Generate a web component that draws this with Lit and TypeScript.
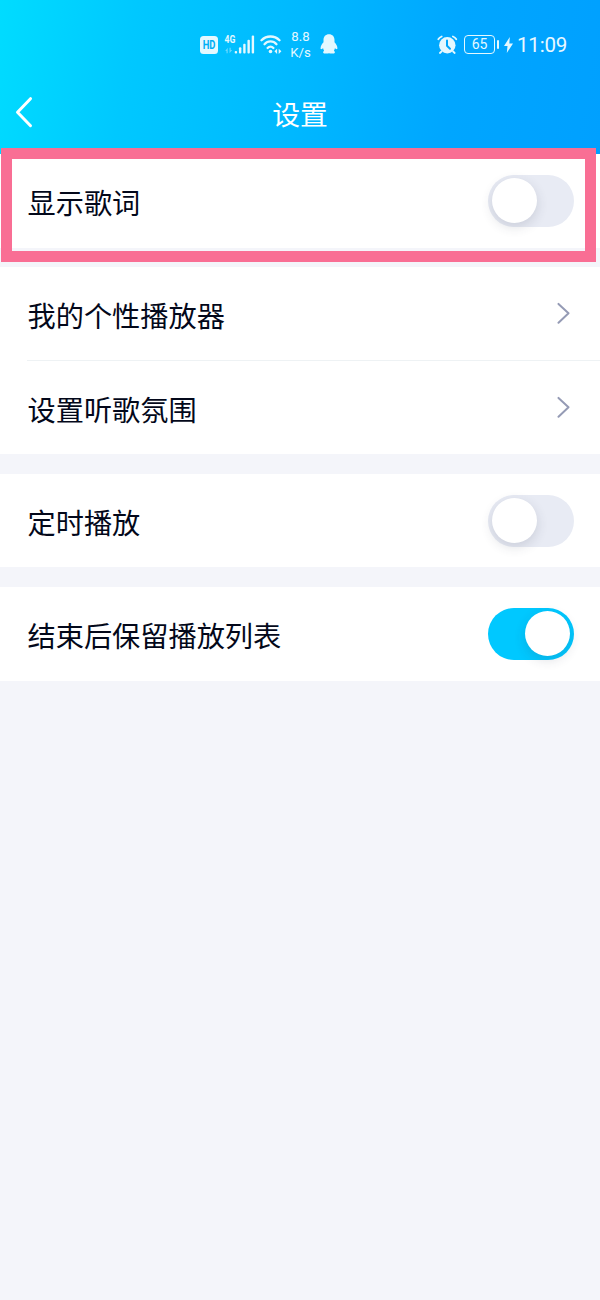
import { LitElement, html, css, svg } from "lit";
import { customElement, property } from "lit/decorators.js";

@customElement("toggle-switch")
class ToggleSwitch extends LitElement {
  @property({ type: Boolean, reflect: true }) on = false;

  static styles = css`
    :host {
      display: flex;
      box-sizing: border-box;
      width: 85.5px;
      height: 52px;
      padding: 3px 3.5px 3.5px;
      border-radius: 26px;
      background: #e8ebf4;
      align-items: center;
    }
    :host([on]) {
      background: #00c8ff;
      justify-content: flex-end;
    }
    .knob {
      width: 45px;
      height: 45px;
      border-radius: 50%;
      background: #fff;
      box-shadow: 0 4px 12px rgba(50, 55, 80, 0.16);
    }
  `;

  render() {
    return html`<div class="knob"></div>`;
  }
}

@customElement("setting-row")
class SettingRow extends LitElement {
  @property() label = "";
  @property() kind = "link";

  static styles = css`
    :host {
      display: flex;
      box-sizing: border-box;
      height: 93.6px;
      padding: 0 26.3px 0 27.5px;
      align-items: center;
      justify-content: space-between;
      background: #fff;
    }
    :host([kind="link"]) {
      height: 93px;
    }
    .label {
      font-size: 28.2px;
      line-height: 40px;
      color: #03081a;
      white-space: nowrap;
      padding-top: 2px;
    }
    .arrow {
      width: 14px;
      height: 22px;
      margin: 0 3.7px 1px 0;
    }
  `;

  render() {
    return html`
      <span class="label">${this.label}</span>
      ${this.kind === "link"
        ? html`<svg class="arrow" viewBox="0 0 14 22" fill="none" stroke="#959bb5" stroke-width="2" stroke-linecap="round" stroke-linejoin="round">
            <path d="M2.500 1.900 12.500 11.300 2.500 20.700" />
          </svg>`
        : html`<toggle-switch ?on=${this.kind === "on"}></toggle-switch>`}
    `;
  }
}

const signalBars = [2.6, 6.3, 9.8, 13.8, 18];

@customElement("app-root")
class AppRoot extends LitElement {
  static styles = css`
    :host {
      display: block;
      position: relative;
      width: 600px;
      height: 1300px;
      overflow: hidden;
      background: #f4f5fa;
      font-family: "Noto Sans CJK SC", "Noto Sans", sans-serif;
    }
    .top {
      box-sizing: border-box;
      height: 154px;
      background: linear-gradient(99deg, #00dcff 0%, #00c8ff 22%, #00b8ff 50%, #00a6ff 75%, #00a0ff 100%);
      color: #fff;
    }
    .status {
      display: flex;
      box-sizing: border-box;
      height: 74px;
      padding: 15px 31px 0 200px;
      align-items: center;
      justify-content: space-between;
    }
    .side {
      display: flex;
      align-items: center;
    }
    .status svg {
      display: block;
      flex: none;
    }
    .svg-text {
      font-family: Roboto, sans-serif;
      font-weight: 700;
    }
    .signal {
      margin-left: 6px;
    }
    .wifi {
      margin-left: 5px;
    }
    .speed {
      display: flex;
      flex-direction: column;
      width: 22px;
      margin-left: 7.5px;
      align-items: center;
      color: #e4f8ff;
      font: 400 13.2px/15.3px Roboto, sans-serif;
    }
    .penguin {
      margin-left: 8.5px;
      margin-bottom: 1px;
    }
    .battery {
      box-sizing: border-box;
      width: 31px;
      height: 19px;
      margin-left: 6px;
      border: 1.5px solid #e4f8ff;
      border-radius: 4px;
      color: #e4f8ff;
      font: 400 14px/17px Roboto, sans-serif;
      text-align: center;
    }
    .cap {
      width: 2px;
      height: 9px;
      margin-left: 2px;
      border-radius: 1px;
      background: #e4f8ff;
    }
    .bolt {
      margin-left: 5px;
    }
    .clock {
      width: 52px;
      margin-left: 4px;
      padding-top: 1px;
      color: #e9f8ff;
      font: 400 20.5px/30px Roboto, sans-serif;
      letter-spacing: -0.2px;
      white-space: nowrap;
    }
    .bar {
      display: grid;
      grid-template-columns: 60px 1fr 60px;
      height: 78px;
      align-items: center;
    }
    .back {
      margin-left: 14px;
      margin-bottom: 2px;
    }
    .title {
      padding-bottom: 1px;
      font-size: 27.8px;
      line-height: 40px;
      text-align: center;
    }
    .group {
      margin-bottom: 19.6px;
    }
    .line {
      height: 1px;
      background: linear-gradient(to right, #fff 27px, #eef2f4 27px);
    }
    .frame {
      position: absolute;
      left: 1px;
      top: 148px;
      box-sizing: border-box;
      width: 595px;
      height: 114px;
      border: 11px solid #f96e94;
    }
  `;

  render() {
    return html`
      <header class="top">
        <div class="status">
          <div class="side">
            <svg class="hd" width="18" height="18" viewBox="0 0 18 18">
              <rect width="18" height="18" rx="3.500" fill="#e4f8ff" />
              <text class="svg-text" x="2.700" y="13.300" fill="#00aef5" font-size="12" textLength="12.800" lengthAdjust="spacingAndGlyphs">HD</text>
            </svg>
            <svg class="signal" width="31" height="22" viewBox="0 0 31 22" fill="#e4f8ff">
              <text class="svg-text" x="0.500" y="9" font-size="10.500" textLength="10.800" lengthAdjust="spacingAndGlyphs">4G</text>
              <g opacity="0.45">
                <path d="M1.200 17 3.700 13.800V19.200H2.500V17z" />
                <path d="M5.500 13.800H6.700V16H8.200L5.500 19.200z" />
              </g>
              ${signalBars.map((h, i) => svg`<rect x=${10.7 + i * 4.25} y=${19.6 - h} width="2.4" height=${h} rx="1" />`)}
            </svg>
            <svg class="wifi" width="22" height="20" viewBox="0 0 22 20" fill="none" stroke="#e4f8ff" stroke-width="2.300" stroke-linecap="round">
              <path d="M1.500 5.300C6.500 .2 14.500 .2 19.500 5.300" />
              <path d="M4.500 9.200C7.800 5.500 13.200 5.500 16.500 9.200" />
              <path d="M7.600 13C9.300 11.100 11.700 11.100 13.400 13" />
              <circle cx="10.500" cy="16.500" r="1.800" fill="#e4f8ff" stroke="none" />
              <path d="M17.100 13.700v5.200l-2.700-2.600zM18.700 13.700v5.200l2.700-2.600z" fill="#e4f8ff" stroke="none" />
            </svg>
            <div class="speed"><span>8.8</span><span>K/s</span></div>
            <svg class="penguin" width="18" height="20" viewBox="0 0 18 20" fill="#e4f8ff">
              <path d="M9 .2C5.600 .2 3.500 2.600 3.500 6V8.300C2 10 .6 12 .6 14c0 1.300.8 1.500 1.600.8l.9-.6c.2 1 .5 1.800 1 2.500-.7.500-1 1.100-1 1.700 0 1.400 3.900 1.400 5.900.9 2 .5 5.900.5 5.900-.9 0-.6-.3-1.200-1-1.700.5-.7.800-1.500 1-2.500l.9.600c.8.700 1.600.5 1.600-.8 0-2-1.400-4-2.900-5.700V6C14.500 2.600 12.400 .2 9 .2z" />
            </svg>
          </div>
          <div class="side">
            <svg class="alarm" width="21" height="20" viewBox="0 0 21 20">
              <circle cx="10.300" cy="10.300" r="8.200" fill="#e4f8ff" />
              <path d="M1.300 4.200Q2.500 2.300 4.700 1.500M19.300 4.200Q18.100 2.300 15.900 1.500M4.500 16.500 2.900 18M16.100 16.500 17.700 18" fill="none" stroke="#e4f8ff" stroke-width="1.800" stroke-linecap="round" />
              <path d="M10 5.500V10.800L13 13.700" fill="none" stroke="#00a6fb" stroke-width="2" stroke-linecap="round" stroke-linejoin="round" />
            </svg>
            <div class="battery">65</div>
            <div class="cap"></div>
            <svg class="bolt" width="9" height="16" viewBox="0 0 9 16" fill="#e4f8ff">
              <path d="M5.800 0 0 9h3.500L2.800 16 9 6.500H5.300z" />
            </svg>
            <div class="clock">11:09</div>
          </div>
        </div>
        <div class="bar">
          <svg class="back" width="20" height="32" viewBox="0 0 20 32" fill="none" stroke="#fff" stroke-width="3" stroke-linecap="round" stroke-linejoin="round">
            <path d="M16.500 2.700 3.500 16.200 16.500 29.700" />
          </svg>
          <div class="title">设置</div>
        </div>
      </header>
      <main>
        <div class="group"><setting-row label="显示歌词" kind="off"></setting-row></div>
        <div class="group">
          <setting-row label="我的个性播放器" kind="link"></setting-row>
          <div class="line"></div>
          <setting-row label="设置听歌氛围" kind="link"></setting-row>
        </div>
        <div class="group"><setting-row label="定时播放" kind="off"></setting-row></div>
        <div class="group"><setting-row label="结束后保留播放列表" kind="on"></setting-row></div>
      </main>
      <div class="frame"></div>
    `;
  }
}
